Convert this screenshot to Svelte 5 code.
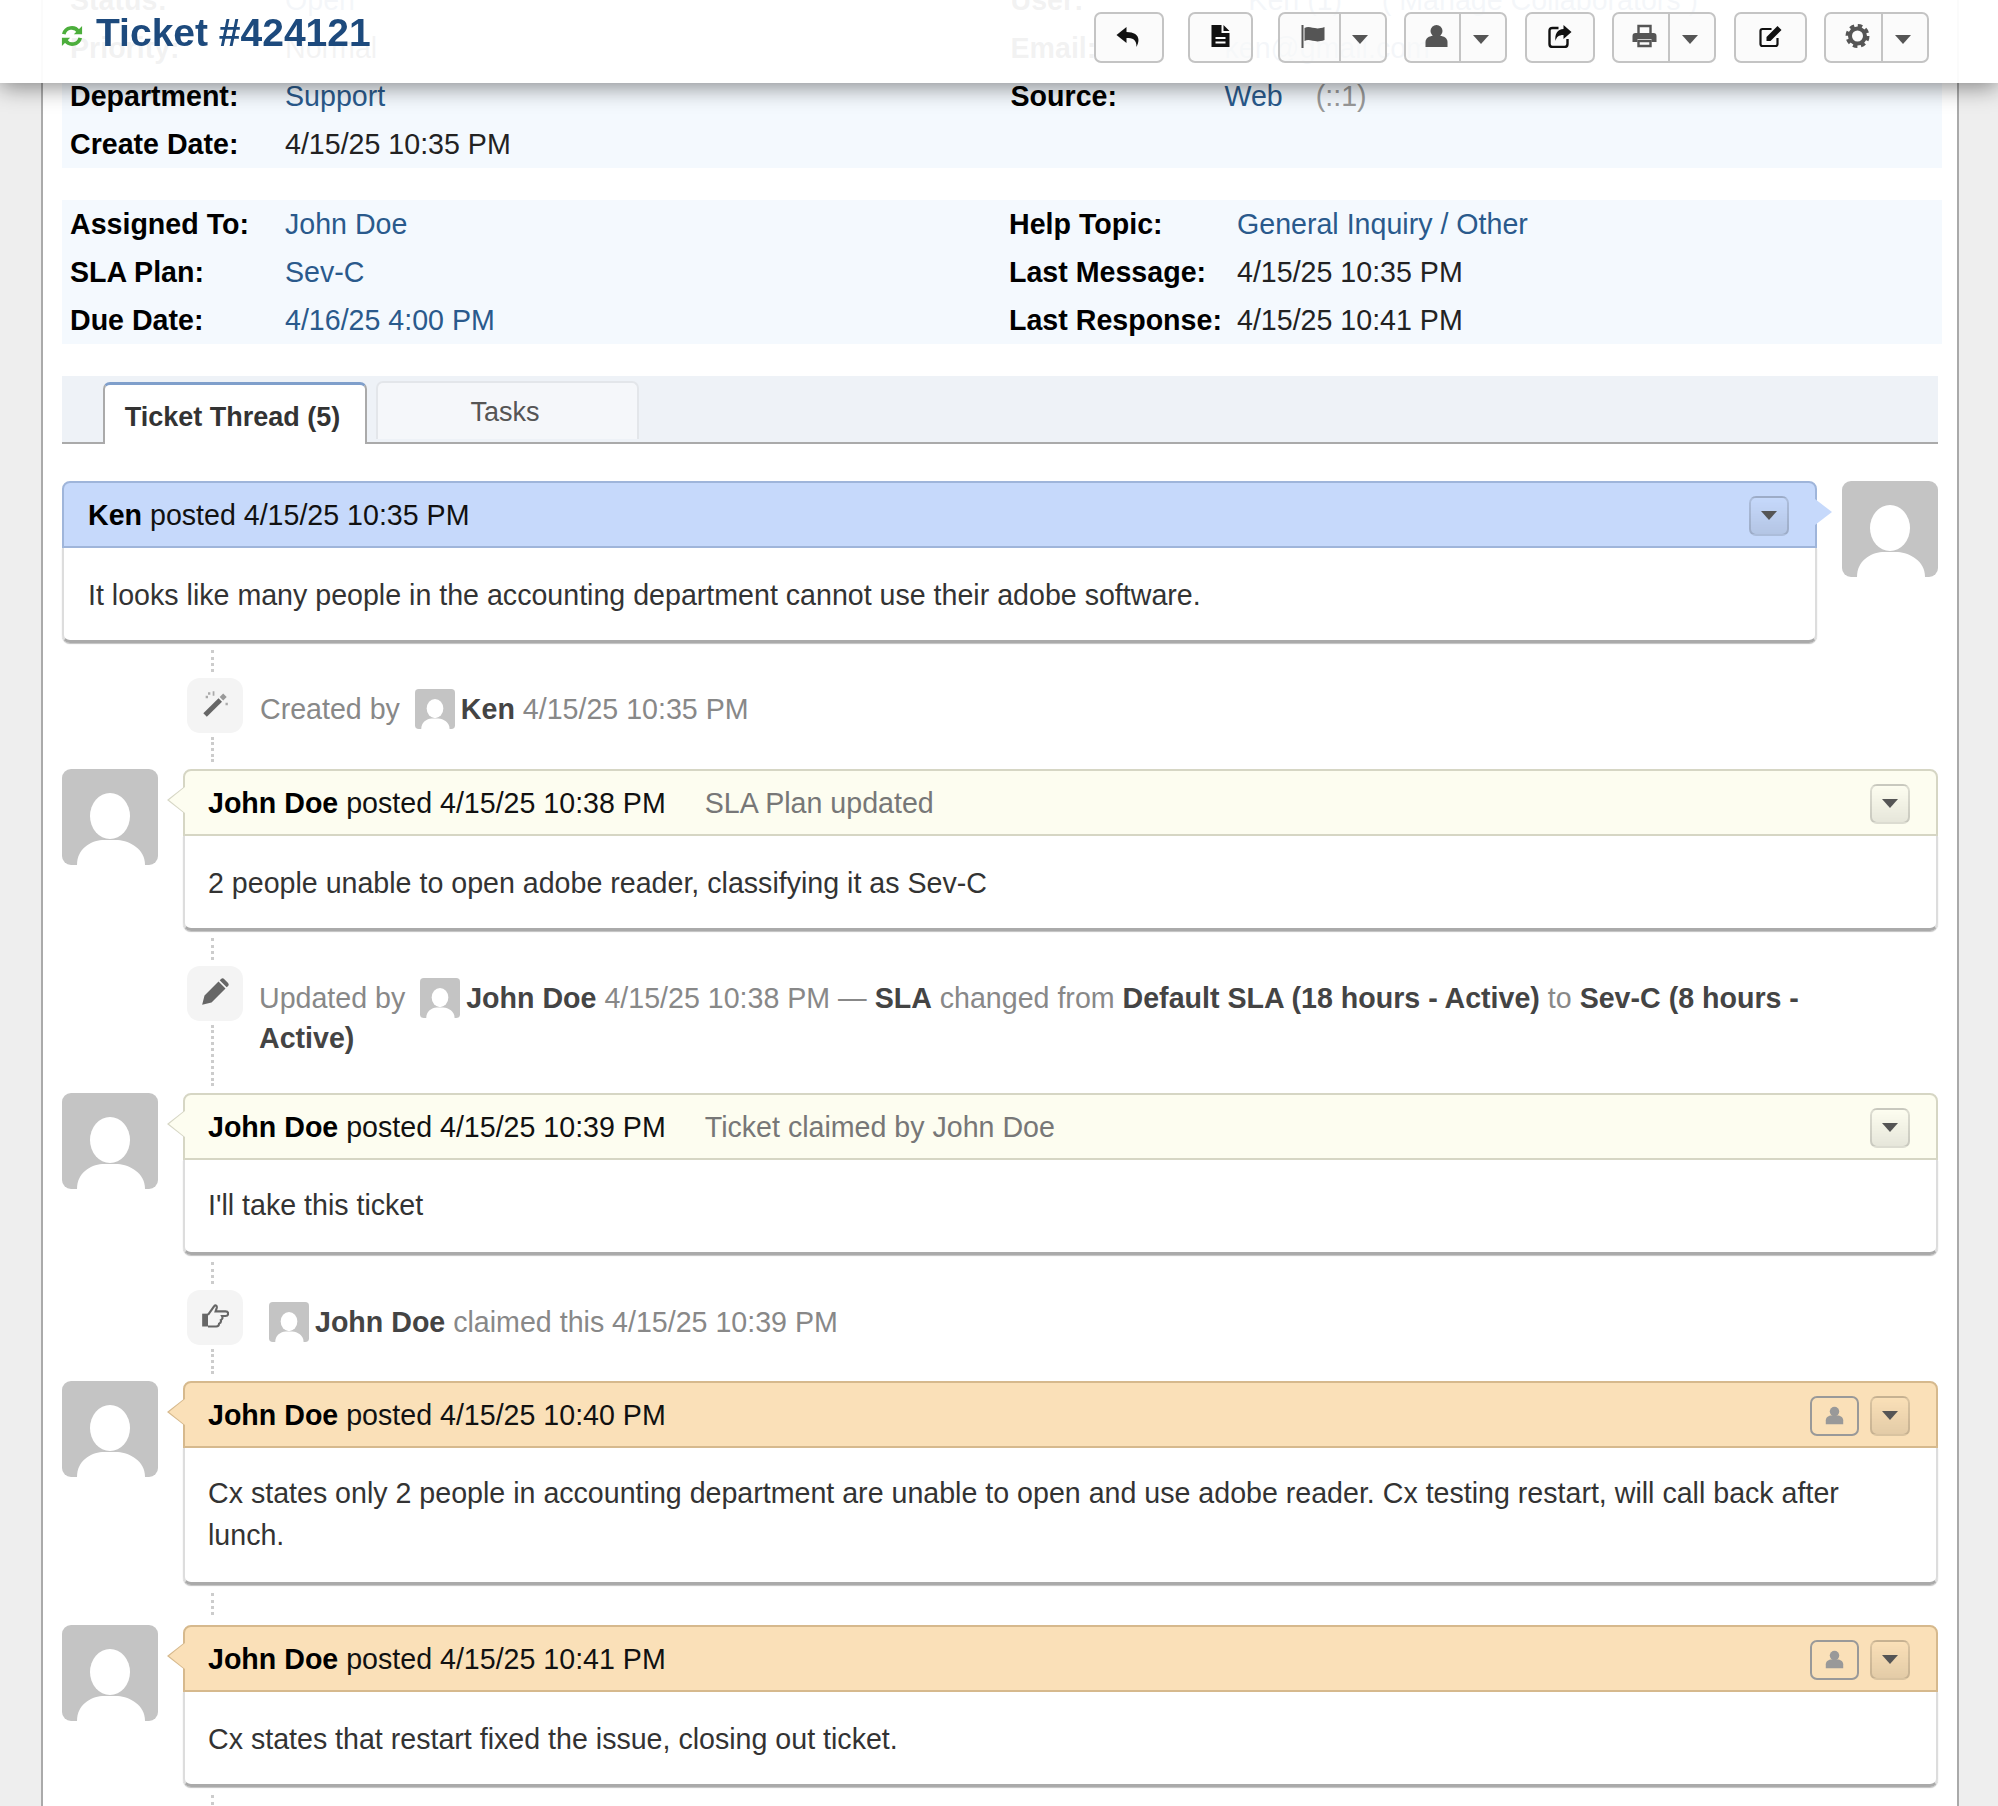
<script lang="ts">
  const toolbar = [
    { icon: 'reply', w: 70 },
    { icon: 'doc', w: 65 },
    { icon: 'flag', w: 109, menu: true },
    { icon: 'user', w: 103, menu: true },
    { icon: 'share', w: 70 },
    { icon: 'print', w: 104, menu: true },
    { icon: 'edit', w: 73 },
    { icon: 'gear', w: 105, menu: true },
  ];

  const info = [
    [
      { label: 'Status:', value: 'Open', kind: 'link' },
      { label: 'User:', value: '   Ken (1)     ( Manage Collaborators )', kind: 'link' },
    ],
    [
      { label: 'Priority:', value: 'Normal' },
      { label: 'Email:', value: 'ken@gmail.com', kind: 'link' },
    ],
    [
      { label: 'Department:', value: 'Support', kind: 'link' },
      { label: 'Source:', value: 'Web', kind: 'link', extra: '(::1)' },
    ],
    [{ label: 'Create Date:', value: '4/15/25 10:35 PM' }, null],
  ];

  const meta = [
    [
      { label: 'Assigned To:', value: 'John Doe', kind: 'link' },
      { label: 'Help Topic:', value: 'General Inquiry / Other', kind: 'link' },
    ],
    [
      { label: 'SLA Plan:', value: 'Sev-C', kind: 'link' },
      { label: 'Last Message:', value: '4/15/25 10:35 PM' },
    ],
    [
      { label: 'Due Date:', value: '4/16/25 4:00 PM', kind: 'link' },
      { label: 'Last Response:', value: '4/15/25 10:41 PM' },
    ],
  ];

  const thread = [
    { type: 'post', tone: 'blue', side: 'right', who: 'Ken', when: '4/15/25 10:35 PM',
      body: 'It looks like many people in the accounting department cannot use their adobe software.' },
    { type: 'event', icon: 'wand', id: 'created' },
    { type: 'post', tone: 'yellow', who: 'John Doe', when: '4/15/25 10:38 PM', title: 'SLA Plan updated',
      body: '2 people unable to open adobe reader, classifying it as Sev-C' },
    { type: 'event', icon: 'pencil', id: 'updated' },
    { type: 'post', tone: 'yellow', tight: true, who: 'John Doe', when: '4/15/25 10:39 PM', title: 'Ticket claimed by John Doe',
      body: "I'll take this ticket" },
    { type: 'event', icon: 'hand', id: 'claimed' },
    { type: 'post', tone: 'orange', tight: true, who: 'John Doe', when: '4/15/25 10:40 PM', internal: true,
      body: 'Cx states only 2 people in accounting department are unable to open and use adobe reader. Cx testing restart, will call back after lunch.' },
    { type: 'dots' },
    { type: 'post', tone: 'orange', who: 'John Doe', when: '4/15/25 10:41 PM', internal: true,
      body: 'Cx states that restart fixed the issue, closing out ticket.' },
    { type: 'dots' },
  ];
</script>

{#snippet avatar(cls)}
  <svg class={cls} viewBox="0 0 96 96">
    <rect width="96" height="96" rx="9" fill="#c4c4c4" />
    <ellipse cx="48" cy="47" rx="20" ry="23" fill="#fff" />
    <path d="M15 96 C15 80 28 72 40 71 H56 C68 72 83 80 83 96 Z" fill="#fff" />
  </svg>
{/snippet}

{#snippet icon(name)}
  <svg class="ico {name}" viewBox="0 0 24 24">
    {#if name === 'reply'}
      <path d="M10 3 L0 11 L10 19 V14 C16 14 20 15 20 23 C25 13 20 8 10 8 Z" />
    {:else if name === 'doc'}
      <path d="M3 1 H13 V9 H21 V23 H3 Z M15 1 L21 7 H15 Z" />
      <path d="M7 13 H17 V15 H7 Z M7 17.5 H17 V19.5 H7 Z" fill="#fff" />
    {:else if name === 'flag'}
      <path d="M1 1 H3 V24 H1 Z M4 4 C10 1 14 7 24 3 V16 C14 20 10 14 4 17 Z" />
    {:else if name === 'user'}
      <circle cx="12" cy="7" r="6" />
      <path d="M1 23 V18 C1 14 5 12 8 12 H16 C19 12 23 14 23 18 V23 Z" />
    {:else if name === 'share'}
      <path d="M11 4 H5 C3 4 2 5 2 7 V20 C2 22 3 23 5 23 H17 C19 23 20 22 20 20 V15" fill="none" stroke="currentColor" stroke-width="2.4" />
      <path d="M16 1 L24 8 L16 15 V11 C11 11 9 13 8 17 C7 10 10 5 16 5 Z" />
    {:else if name === 'print'}
      <path d="M6 9 V2 H18 V9" fill="none" stroke="currentColor" stroke-width="2.4" />
      <path d="M3 9 H21 C23 9 24 10 24 12 V18 H19 V15 H5 V18 H0 V12 C0 10 1 9 3 9 Z" />
      <path d="M6 17 H18 V22 H6 Z" fill="none" stroke="currentColor" stroke-width="2.4" />
    {:else if name === 'edit'}
      <path d="M13 5 H4 C2.5 5 2 6 2 7 V20 C2 21 2.5 22 4 22 H17 C18.5 22 19 21 19 20 V14" fill="none" stroke="currentColor" stroke-width="2.2" />
      <path d="M8 13 L19 2 L23 6 L12 17 L8 17 Z" />
    {:else if name === 'gear'}
      <circle cx="12" cy="12" r="7.5" fill="none" stroke="currentColor" stroke-width="4" />
      <circle cx="12" cy="12" r="10" fill="none" stroke="currentColor" stroke-width="4" stroke-dasharray="4.4 3.45" />
    {:else if name === 'wand'}
      <path d="M2 20 L15 7 L18 10 L5 23 Z" />
      <path d="M16 6 L19 3 L22 6 L19 9 Z" fill="#999" />
      <path d="M6 2 H8 V4 H6 Z M10 1 H11.5 V5 H10 Z M21 11 H23 V13 H21 Z M4 5 H6 V7 H4 Z" fill="#aaa" />
    {:else if name === 'pencil'}
      <path d="M1 23 L3 15 L15 3 L21 9 L9 21 Z M17 1 C18 0 19 0 20 1 L23 4 C24 5 24 6 23 7 L22 8 L16 2 Z" />
    {:else if name === 'hand'}
      <path d="M1 10 H6 V21 H1 Z" />
      <path d="M6 11 L11 4 C12 2 14 3 13.5 5 L12.5 8 H21 C24 8 24 12 21 12 H18 C19 14 18 15 17 15.5 C17.5 17 16.5 18 15.5 18.5 C15.5 20 15 21 13 21 H6" fill="none" stroke="currentColor" stroke-width="1.8" />
    {/if}
  </svg>
{/snippet}

{#snippet caret()}<span class="caret"></span>{/snippet}

{#snippet inlineUser(name)}{@render avatar('mini')}<strong>{name}</strong>{/snippet}

{#snippet rows(list, cls)}
  <div class="info {cls}">
    {#each list as row}
      <div class="row">
        {#each row as cell}
          <div class="cell">
            {#if cell}
              <span class="label">{cell.label}</span>
              <span class="value" class:link={cell.kind === 'link'}>{cell.value}</span>
              {#if cell.extra}<span class="extra">{cell.extra}</span>{/if}
            {/if}
          </div>
        {/each}
      </div>
    {/each}
  </div>
{/snippet}

<header class="topbar">
  <h1>
    <svg class="sync" viewBox="0 0 24 24">
      <path d="M3 10 C5 2 15 1 19 7" />
      <path d="M21 14 C19 22 9 23 5 17" />
      <path class="tip" d="M23 1 V10 H14 Z M1 23 V14 H10 Z" />
    </svg>
    Ticket #424121
  </h1>
  <div class="tools">
    {#each toolbar as b}
      <div class="tool" class:split={b.menu} style="width: {b.w}px">
        <span class="tool-main">{@render icon(b.icon)}</span>
        {#if b.menu}<span class="tool-menu">{@render caret()}</span>{/if}
      </div>
    {/each}
  </div>
</header>

<div class="page">
  <main class="sheet">
    {@render rows(info, 'top')}
    {@render rows(meta, 'second')}

    <nav class="tabs">
      <span class="tab active">Ticket Thread (5)</span>
      <span class="tab">Tasks</span>
    </nav>

    <div class="thread">
      {#each thread as item}
        {#if item.type === 'post'}
          <article class="post {item.tone}" class:right={item.side === 'right'} class:tight={item.tight}>
            {@render avatar('face')}
            <div class="entry">
              <div class="head">
                <span class="who"><strong>{item.who}</strong> posted {item.when}</span>
                {#if item.title}<span class="title">{item.title}</span>{/if}
                <span class="actions">
                  {#if item.internal}<span class="tag">{@render icon('user')}</span>{/if}
                  <span class="drop">{@render caret()}</span>
                </span>
              </div>
              <div class="body">{item.body}</div>
            </div>
          </article>
        {:else if item.type === 'event'}
          <div class="event {item.id}">
            <div class="rail">
              <span class="dots"></span>
              <span class="badge">{@render icon(item.icon)}</span>
              <span class="dots grow"></span>
            </div>
            <p>
              {#if item.id === 'created'}
                Created by {@render inlineUser('Ken')} 4/15/25 10:35 PM
              {:else if item.id === 'updated'}
                Updated by {@render inlineUser('John Doe')} 4/15/25 10:38 PM — <strong>SLA</strong> changed from <strong>Default SLA (18 hours - Active)</strong> to <strong>Sev-C (8 hours - Active)</strong>
              {:else}
                {@render inlineUser('John Doe')} claimed this 4/15/25 10:39 PM
              {/if}
            </p>
          </div>
        {:else}
          <div class="gap"><span class="dots"></span></div>
        {/if}
      {/each}
    </div>
  </main>
</div>

<style>
  :global(body) {
    margin: 0;
    background: #eee;
    font-family: "Liberation Sans", Arial, sans-serif;
    font-size: 28.6px;
    color: #333;
  }

  .topbar {
    position: fixed;
    top: 0;
    left: 0;
    right: 0;
    z-index: 5;
    height: 83px;
    display: flex;
    justify-content: space-between;
    background: rgba(255, 255, 255, 0.95);
    box-shadow: 0 4px 22px rgba(0, 0, 0, 0.45);
  }
  h1 {
    margin: 0;
    padding: 9px 0 0 60px;
    height: 48px;
    display: flex;
    align-items: center;
    gap: 12px;
    font-size: 39px;
    font-weight: bold;
    color: #1d4a7d;
  }
  .sync { width: 24px; height: 22px; fill: none; stroke: #4cae3c; stroke-width: 4; margin-top: 6px; }
  .sync .tip { fill: #4cae3c; stroke: none; }

  .tools { display: flex; gap: 17.5px; padding: 12px 69px 0 0; }
  .tool:nth-child(-n + 2) { margin-right: 7px; }
  .tool {
    box-sizing: border-box;
    height: 51px;
    display: flex;
    background: rgba(248, 248, 248, 0.6);
    border: 2px solid #c4c4c4;
    border-radius: 7px;
  }
  .tool-main { flex: 1; display: flex; align-items: center; justify-content: center; padding-bottom: 3px; }
  .split .tool-main { padding-left: 7px; }
  .tool-menu {
    width: 46px;
    display: flex;
    align-items: center;
    justify-content: center;
    padding: 4px 5px 0 0;
    box-sizing: border-box;
    border-left: 2px solid #c4c4c4;
  }
  .ico { width: 25px; height: 24px; fill: currentColor; color: #111; }
  .flag, .user, .print, .gear { color: #555; }
  .caret {
    display: block;
    width: 0;
    height: 0;
    border-left: 8px solid transparent;
    border-right: 8px solid transparent;
    border-top: 9px solid #555;
  }

  .page { height: 1806px; overflow: hidden; }
  .sheet {
    display: flow-root;
    box-sizing: border-box;
    width: 1918px;
    height: 1806px;
    margin-left: 41px;
    padding: 0 19px;
    background: #fff;
    border-left: 2px solid #aaa;
    border-right: 2px solid #aaa;
  }

  .info {
    width: 1880px;
    background: #f4f9fe;
    line-height: 48px;
  }
  .info.top { margin-top: -24px; }
  .info.second { margin-top: 32px; }
  .row { display: flex; height: 48px; }
  .cell { display: flex; }
  .cell:first-child { width: 946px; padding-left: 8px; box-sizing: border-box; }
  .label { width: 215px; font-weight: bold; color: #000; }
  .value { color: #222; white-space: pre; }
  .top .cell:last-child { margin-left: 2.5px; }
  .top .cell:last-child .label { width: 214px; }
  .second .cell:last-child { margin-left: 1px; }
  .second .cell:last-child .label { width: 228px; }
  .link { color: #2a5a8c; }
  .extra { margin-left: 33px; color: #999; }

  .tabs {
    margin-top: 32px;
    height: 66px;
    padding-left: 41px;
    display: flex;
    align-items: flex-end;
    gap: 9px;
    background: #eef2f7;
    border-bottom: 2px solid #aaa;
  }
  .tab {
    box-sizing: border-box;
    width: 263px;
    height: 58px;
    padding: 8px 5px 0 0;
    text-align: center;
    color: #555;
    font-size: 27px;
    line-height: 42px;
    background: #f5f7fa;
    border: 2px solid #e3e6ea;
    border-bottom: 0;
    border-radius: 7px 7px 0 0;
    margin-bottom: 3px;
  }
  .tab.active {
    width: 264px;
    height: 62px;
    margin-bottom: -2px;
    padding-top: 11px;
    font-weight: bold;
    color: #333;
    background: #fff;
    border: 2px solid #aaa;
    border-top: 3px solid #7f9fcb;
    border-bottom: 0;
  }

  .thread { margin-top: 37px; }
  .post { display: flex; gap: 25px; align-items: flex-start; }
  .post.right { flex-direction: row-reverse; }
  .face { width: 96px; height: 96px; flex: none; }
  .mini { width: 40px; height: 40px; vertical-align: middle; margin: -8px 6px -4px 7px; }

  .entry { flex: 1; min-width: 0; position: relative; }
  .head {
    box-sizing: border-box;
    height: 67px;
    padding: 2px 26px 0 23px;
    display: flex;
    align-items: center;
    color: #111;
    border: 2px solid;
    border-radius: 8px 8px 0 0;
    position: relative;
  }
  .blue .head { padding-left: 24px; }
  .head strong { color: #000; }
  .head::before,
  .head::after {
    content: '';
    position: absolute;
    top: 16px;
    left: -16px;
    width: 16px;
    height: 26px;
    clip-path: polygon(100% 0, 0 50%, 100% 100%);
  }
  .head::before { background: inherit; z-index: 1; }
  .head::after { left: -18px; width: 18px; background: var(--edge); top: 15px; height: 28px; }
  .right .head::before,
  .right .head::after {
    left: auto;
    right: -17px;
    width: 17px;
    clip-path: polygon(0 0, 100% 50%, 0 100%);
  }
  .right .head::after { display: none; }
  .title { margin-left: 39px; color: #777; }
  .actions { margin-left: auto; display: flex; gap: 11px; }
  .drop, .tag {
    box-sizing: border-box;
    height: 40px;
    width: 40px;
    display: flex;
    align-items: center;
    justify-content: center;
    border-radius: 7px;
  }
  .drop {
    border: 2px solid rgba(0, 0, 0, 0.13);
    background: linear-gradient(rgba(0, 0, 0, 0), rgba(0, 0, 0, 0.09));
  }
  .tag { width: 49px; border: 2px solid #999; }
  .tag .ico { width: 19px; height: 19px; color: #999; }

  .blue .head { background: #c6d9fb; border-color: #9fb5da; --edge: #9fb5da; }
  .yellow .head { background: #fdfdf0; border-color: #d6d6c4; --edge: #d6d6c4; }
  .orange .head { background: #fae0b8; border-color: #d6b98d; --edge: #d6b98d; }

  .body {
    padding: 26px 25px 24px 23px;
    line-height: 42px;
    color: #333;
    border-left: 2px solid #ddd;
    border-right: 2px solid #ddd;
    border-bottom: 3px solid #aaa;
    border-radius: 0 0 8px 8px;
    box-shadow: 0 1px 1px rgba(0, 0, 0, 0.25);
  }
  .blue .body { padding-left: 24px; }
  .tight .body { padding-top: 24px; padding-bottom: 26px; }

  .event { display: flex; margin-left: 125px; }
  .rail { width: 56px; flex: none; display: flex; flex-direction: column; padding: 7px 0; }
  .dots { display: block; height: 22px; margin-left: 24px; border-left: 3px dotted #ccc; }
  .dots.grow { flex: 1; height: auto; margin-top: 4px; }
  .badge {
    height: 55px;
    margin: 6px 0 0;
    display: flex;
    align-items: center;
    justify-content: center;
    background: #f4f4f4;
    border-radius: 13px;
  }
  .badge .ico { width: 28px; height: 28px; color: #666; margin-top: -4px; }
  .event p {
    margin: 0 0 0 17px;
    padding: 46px 0 40px;
    max-width: 1600px;
    line-height: 40px;
    color: #888;
  }
  .event p strong { color: #444; }
  .event.updated p { margin-left: 16px; padding: 47px 0 35px; }
  .event.claimed p { margin-left: 17px; padding: 47px 0 39px 2px; }

  .gap { height: 40px; margin-left: 125px; padding-top: 8px; box-sizing: border-box; }
</style>
